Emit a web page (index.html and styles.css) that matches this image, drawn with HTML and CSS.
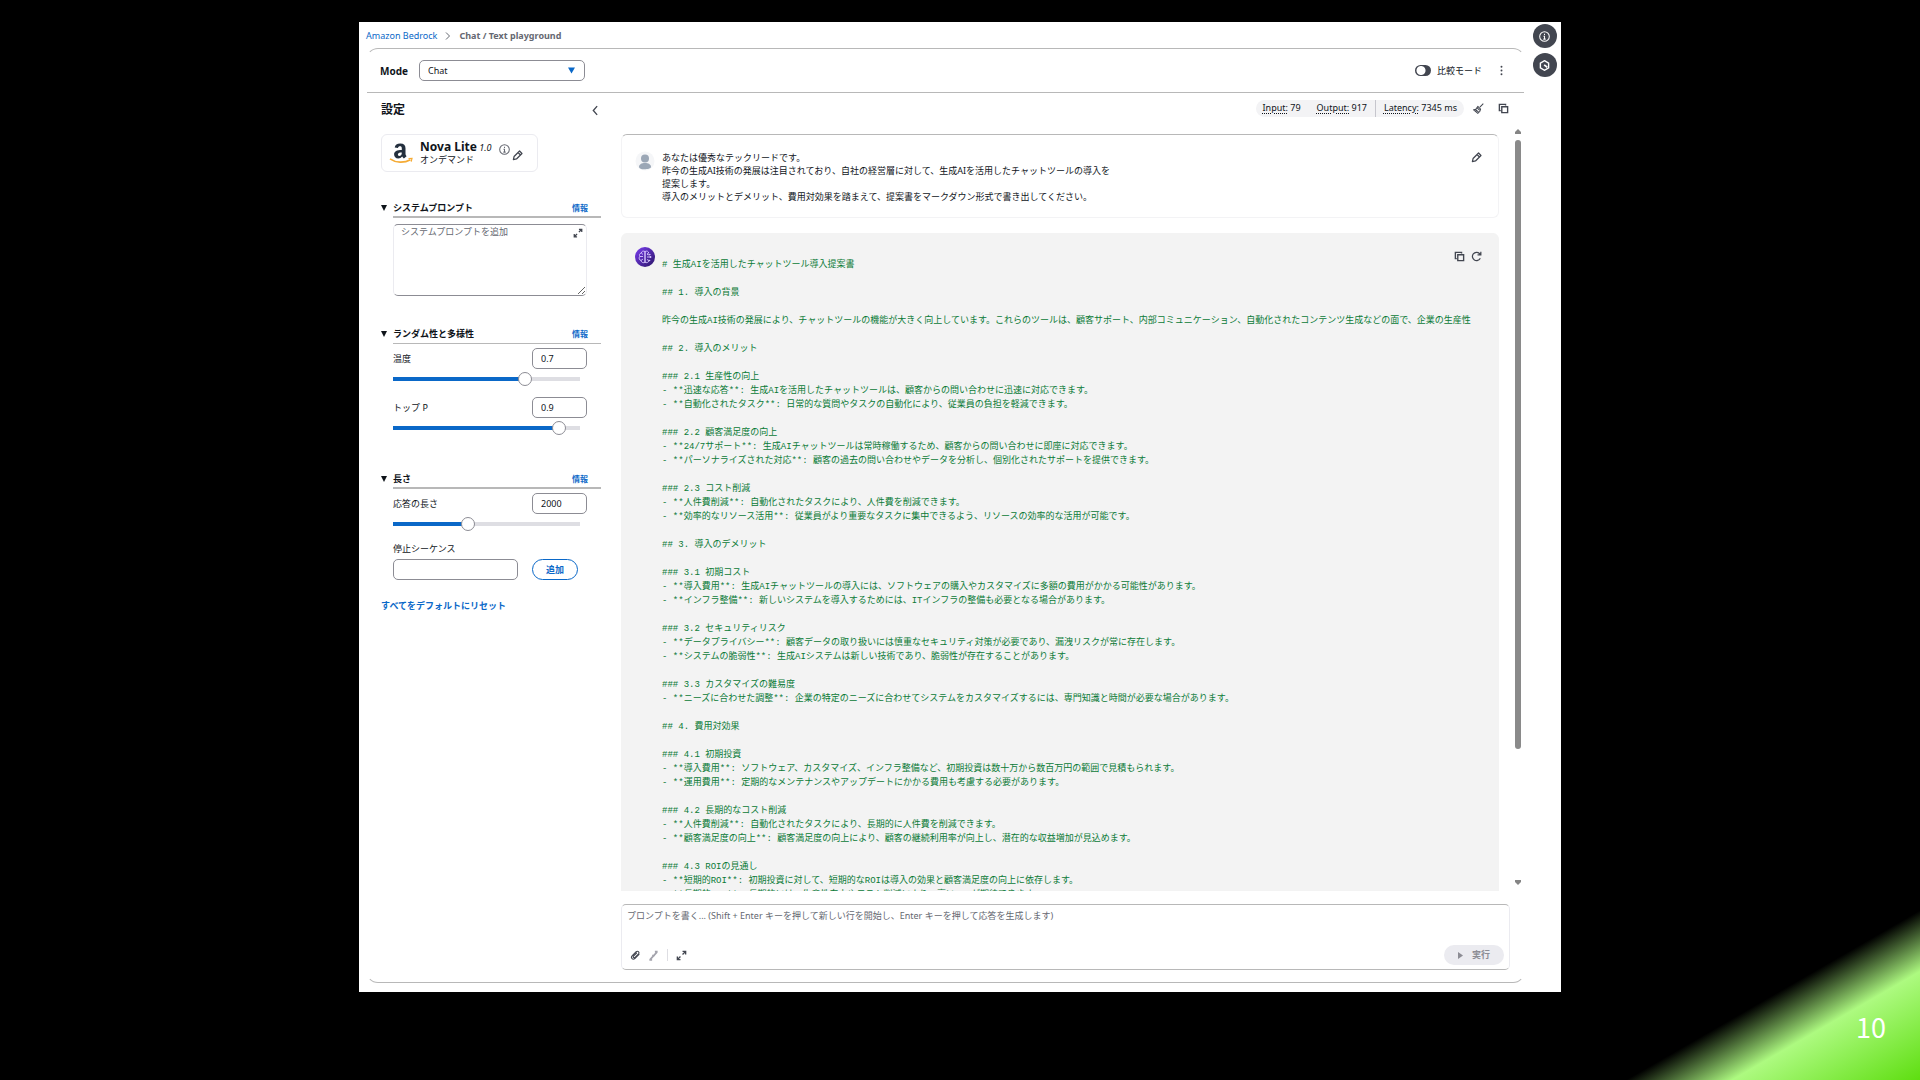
FILE: index.html
```html
<!DOCTYPE html>
<html lang="ja">
<head>
<meta charset="utf-8">
<title>Chat / Text playground</title>
<link rel="stylesheet" href="styles.css">
</head>
<body>
<svg class="sprite" aria-hidden="true">
  <symbol id="copy" viewBox="0 0 16 16"><path d="M11 3.500V2H2v9h2M5.500 5.500h8.500v8.500H5.500z" fill="none" stroke="currentColor" stroke-width="2"/></symbol>
  <symbol id="pen" viewBox="0 0 16 16"><path d="M2 14l1-4.500 8-8 3.500 3.500-8 8zM9 4l3 3" fill="none" stroke="currentColor" stroke-width="1.800" stroke-linejoin="round"/></symbol>
  <symbol id="expand" viewBox="0 0 16 16"><path d="M9.500 2H14v4.500M14 2L9.500 6.500M6.500 14H2V9.500M2 14l4.500-4.500" fill="none" stroke="currentColor" stroke-width="2"/></symbol>
  <symbol id="info" viewBox="0 0 16 16"><circle cx="8" cy="8" r="7" fill="none" stroke="currentColor" stroke-width="1.500"/><path d="M8 7v5M8 4v1.800M6.500 7.500H8M6.300 11.800h3.400" stroke="currentColor" stroke-width="1.500"/></symbol>
</svg>
<div class="slide">
  <div class="window">
    <div class="page">
      <nav class="crumbs" aria-label="breadcrumb">
        <a href="#">Amazon Bedrock</a>
        <svg class="crumb-sep" viewBox="0 0 6 8"><path d="M1 0.500L4.500 4 1 7.500" fill="none" stroke="#656871"/></svg>
        <span class="current">Chat / Text playground</span>
      </nav>
      <div class="playground">
        <header class="modebar">
          <label for="mode">Mode</label>
          <div class="select-wrap">
            <select id="mode"><option>Chat</option></select>
            <svg class="caret" viewBox="0 0 8 8"><path d="M0 0.500h8L4 7.500z" fill="#0a68c8"/></svg>
          </div>
          <label class="compare"><input type="checkbox" class="toggle">比較モード</label>
          <button class="icon-btn kebab" aria-label="menu"><svg class="ico" viewBox="0 0 16 16"><g fill="#424650"><circle cx="8" cy="2.500" r="1.400"/><circle cx="8" cy="8" r="1.400"/><circle cx="8" cy="13.500" r="1.400"/></g></svg></button>
        </header>
        <div class="body">
          <aside class="settings">
            <div class="settings-head">
              <h2>設定</h2>
              <button class="icon-btn" aria-label="collapse"><svg class="ico" viewBox="0 0 10 10"><path d="M6.500 1L3 5l3.500 4" fill="none" stroke="#424650" stroke-width="1.200"/></svg></button>
            </div>
            <div class="model">
              <svg class="logo" viewBox="0 0 24 22"><path d="M12.800 8.100V6.500c0-1.700-.5-2.300-1.800-2.300-1.200 0-1.800.6-2 1.800l-3.300-.4C6.100 3 7.900 1.500 11.300 1.500c3.600 0 5.200 1.600 5.200 4.700v5.400c0 1.100.3 1.700 1.100 2.700l-2.700 2.200c-.8-.6-1.300-1.200-1.700-1.900-1.100 1.300-2.200 1.900-4 1.900-2.500 0-4.100-1.500-4.100-3.900C5.100 9.300 7.900 8.200 12.800 8.100zm0 2.300c-2.700 0-3.900.6-3.900 2.200 0 .8.500 1.400 1.300 1.400 1.500 0 2.600-1.200 2.600-3z" fill="#232f3e"/><path d="M1 16.800c6 4.200 14 4.400 20.500.9" fill="none" stroke="#f5ab35" stroke-width="1.600"/><path d="M19.500 16.500l3.500-.2-.8 3.300" fill="none" stroke="#f5ab35" stroke-width="1.200"/></svg>
              <div class="model-text">
                <div class="model-name"><strong>Nova Lite</strong> <em>1.0</em></div>
                <div>オンデマンド</div>
              </div>
              <svg class="model-info"><use href="#info"/></svg>
              <button class="icon-btn" aria-label="edit model"><svg class="ico"><use href="#pen"/></svg></button>
            </div>

            <section class="group">
              <div class="group-head thick"><h3>システムプロンプト</h3><a href="#">情報</a></div>
              <div class="area-wrap">
                <textarea class="field" aria-label="システムプロンプト" placeholder="システムプロンプトを追加"></textarea>
                <svg class="area-expand"><use href="#expand"/></svg>
              </div>
            </section>

            <section class="group">
              <div class="group-head"><h3>ランダム性と多様性</h3><a href="#">情報</a></div>
              <div class="param"><label for="temp">温度</label><input class="field num" id="temp" value="0.7"></div>
              <input type="range" class="slider" aria-label="温度" value="72" style="--fill:72%">
              <div class="param"><label for="topp">トップ P</label><input class="field num" id="topp" value="0.9"></div>
              <input type="range" class="slider" aria-label="トップ P" value="92" style="--fill:92%">
            </section>

            <section class="group">
              <div class="group-head thick"><h3>長さ</h3><a href="#">情報</a></div>
              <div class="param"><label for="len">応答の長さ</label><input class="field num" id="len" value="2000"></div>
              <input type="range" class="slider" aria-label="応答の長さ" value="39" style="--fill:39%">
              <label class="stop-label" for="stop">停止シーケンス</label>
              <div class="stop"><input class="field" id="stop"><button class="add">追加</button></div>
            </section>
            <a class="reset" href="#">すべてをデフォルトにリセット</a>
          </aside>

          <main class="chat">
            <div class="toolbar">
              <div class="metrics">
                <span><u>Input:</u> 79</span><span><u>Output:</u> 917</span><span class="ruled"><u>Latency:</u> 7345 ms</span>
              </div>
              <button class="icon-btn" aria-label="clear"><svg class="ico" viewBox="0 0 16 16"><path d="M15 1l-5 5M7 5l4 4-1 3-3 3-6-5 3-1zM4 9.500l4.500 4M6 7l3.500 3.500M3.500 12l2-1.500" fill="none" stroke="currentColor" stroke-width="1.500"/></svg></button>
              <button class="icon-btn" aria-label="copy"><svg class="ico"><use href="#copy"/></svg></button>
            </div>
            <div class="scroller">
              <div class="messages">
                <article class="msg user">
                  <svg class="avatar" viewBox="0 0 20 20"><circle cx="10" cy="10" r="9.500" fill="#f5f6f8"/><circle cx="10" cy="7.500" r="4" fill="#9ba7b6"/><path d="M4 16c0-2.500 2.500-4 6-4s6 1.500 6 4-12 3.500-12 0z" fill="#9ba7b6"/></svg>
                  <p>あなたは優秀なテックリードです。
昨今の生成AI技術の発展は注目されており、自社の経営層に対して、生成AIを活用したチャットツールの導入を
提案します。
導入のメリットとデメリット、費用対効果を踏まえて、提案書をマークダウン形式で書き出してください。</p>
                  <div class="actions"><button class="icon-btn" aria-label="edit"><svg class="ico"><use href="#pen"/></svg></button></div>
                </article>
                <article class="msg reply">
                  <svg class="avatar" viewBox="0 0 20 20"><defs><linearGradient id="g" x1="0" y1="0" x2="1" y2="1"><stop offset="0" stop-color="#7a3df0"/><stop offset="1" stop-color="#2a1566"/></linearGradient></defs><circle cx="10" cy="10" r="10" fill="url(#g)"/><g fill="none" stroke="#d9c9ff" stroke-width="0.900"><path d="M10 4.500C8 3.500 6.500 4.500 6.300 6 4.500 6.500 4 8 4.800 9.500 3.500 11 4.200 13 6 13.500c.3 2 2.500 2.800 4 1.700zM10 4.500v10.700M6.300 6l1.700 1.500M4.800 9.500H8M6 13.500L8 12"/><path d="M10 4.500c2-1 3.500 0 3.700 1.500L12 7M10 15.200c1.500 1 3.500.3 4-1.700l-2-1M12 10h3.500M12 7.500L14.500 8"/></g><g fill="#d9c9ff"><circle cx="15.500" cy="10" r="0.900"/><circle cx="14.800" cy="7.500" r="0.800"/><circle cx="14.500" cy="13.500" r="0.800"/></g></svg>
                  <pre># 生成AIを活用したチャットツール導入提案書

## 1. 導入の背景

昨今の生成AI技術の発展により、チャットツールの機能が大きく向上しています。これらのツールは、顧客サポート、内部コミュニケーション、自動化されたコンテンツ生成などの面で、企業の生産性

## 2. 導入のメリット

### 2.1 生産性の向上
- **迅速な応答**: 生成AIを活用したチャットツールは、顧客からの問い合わせに迅速に対応できます。
- **自動化されたタスク**: 日常的な質問やタスクの自動化により、従業員の負担を軽減できます。

### 2.2 顧客満足度の向上
- **24/7サポート**: 生成AIチャットツールは常時稼働するため、顧客からの問い合わせに即座に対応できます。
- **パーソナライズされた対応**: 顧客の過去の問い合わせやデータを分析し、個別化されたサポートを提供できます。

### 2.3 コスト削減
- **人件費削減**: 自動化されたタスクにより、人件費を削減できます。
- **効率的なリソース活用**: 従業員がより重要なタスクに集中できるよう、リソースの効率的な活用が可能です。

## 3. 導入のデメリット

### 3.1 初期コスト
- **導入費用**: 生成AIチャットツールの導入には、ソフトウェアの購入やカスタマイズに多額の費用がかかる可能性があります。
- **インフラ整備**: 新しいシステムを導入するためには、ITインフラの整備も必要となる場合があります。

### 3.2 セキュリティリスク
- **データプライバシー**: 顧客データの取り扱いには慎重なセキュリティ対策が必要であり、漏洩リスクが常に存在します。
- **システムの脆弱性**: 生成AIシステムは新しい技術であり、脆弱性が存在することがあります。

### 3.3 カスタマイズの難易度
- **ニーズに合わせた調整**: 企業の特定のニーズに合わせてシステムをカスタマイズするには、専門知識と時間が必要な場合があります。

## 4. 費用対効果

### 4.1 初期投資
- **導入費用**: ソフトウェア、カスタマイズ、インフラ整備など、初期投資は数十万から数百万円の範囲で見積もられます。
- **運用費用**: 定期的なメンテナンスやアップデートにかかる費用も考慮する必要があります。

### 4.2 長期的なコスト削減
- **人件費削減**: 自動化されたタスクにより、長期的に人件費を削減できます。
- **顧客満足度の向上**: 顧客満足度の向上により、顧客の継続利用率が向上し、潜在的な収益増加が見込めます。

### 4.3 ROIの見通し
- **短期的ROI**: 初期投資に対して、短期的なROIは導入の効果と顧客満足度の向上に依存します。
- **長期的ROI**: 長期的には、生産性向上やコスト削減により、高いROIが期待できます。</pre>
                  <div class="actions">
                    <button class="icon-btn" aria-label="copy reply"><svg class="ico"><use href="#copy"/></svg></button>
                    <button class="icon-btn" aria-label="retry"><svg class="ico" viewBox="0 0 16 16"><path d="M13.500 10.500a6 6 0 1 1-1.200-6.800L14 5.500M14.300 1v4.800H9.500" fill="none" stroke="currentColor" stroke-width="1.800"/></svg></button>
                  </div>
                </article>
              </div>
              <div class="scrollbar" aria-hidden="true">
                <svg viewBox="0 0 6 5"><path d="M3 0l3 3v2H0V3z" fill="#858585"/></svg>
                <div class="track"><div class="thumb"></div></div>
                <svg viewBox="0 0 6 5"><path d="M3 5L0 2V0h6v2z" fill="#858585"/></svg>
              </div>
            </div>
            <form class="composer">
              <textarea aria-label="プロンプト" placeholder="プロンプトを書く... (Shift + Enter キーを押して新しい行を開始し、Enter キーを押して応答を生成します)"></textarea>
              <div class="composer-bar">
                <button type="button" class="icon-btn" aria-label="attach"><svg class="ico" viewBox="0 0 16 16"><path d="M13.500 6l-6.500 6.500c-3 2.500-6.500-1-4-4L9 2.500c2.500-2 5 .8 3.500 3L7 11c-1.500 1-3-.5-2-2l5-5" fill="none" stroke="currentColor" stroke-width="1.600"/></svg></button>
                <button type="button" class="icon-btn faded" aria-label="tools"><svg class="ico" viewBox="0 0 16 16"><path d="M3 14L13 3M2 14.500h4M6 8l4 0M10 2.500h4" fill="none" stroke="currentColor" stroke-width="2.500"/></svg></button>
                <span class="divider"></span>
                <button type="button" class="icon-btn" aria-label="expand"><svg class="ico"><use href="#expand"/></svg></button>
                <button type="button" class="run" disabled><svg viewBox="0 0 5 7"><path d="M0 0l5 3.500L0 7z" fill="#8c8c94"/></svg>実行</button>
              </div>
            </form>
          </main>
        </div>
      </div>
    </div>
    <div class="rail">
      <button class="round" aria-label="info"><svg><use href="#info"/></svg></button>
      <button class="round" aria-label="history"><svg viewBox="0 0 16 16"><path d="M8 1l6 3.500v7L8 15l-6-3.500v-7z" fill="none" stroke="currentColor" stroke-width="2"/><path d="M7.500 7l4.500 3.500" stroke="currentColor" stroke-width="2.500"/></svg></button>
    </div>
  </div>
  <span class="page-number">10</span>
</div>
</body>
</html>
```
FILE: styles.css
```css
* { box-sizing: border-box; }
body {
  margin: 0;
  background: #000;
  color: #0f141a;
  font: 9px/14px "Noto Sans", "Noto Sans CJK JP", sans-serif;
}
h2, h3, p, pre { margin: 0; }
a { color: #0a68c8; text-decoration: none; }
button, input, select, textarea { font: inherit; color: inherit; margin: 0; }
.sprite { position: absolute; width: 0; height: 0; }

.slide {
  position: relative;
  height: 100vh;
  padding: 22px 0 88px;
  display: flex;
  justify-content: center;
  background: linear-gradient(150deg, #000 calc(100% - 147px), #adfa80 calc(100% - 94px), #5ede10 100%);
}
.page-number {
  position: absolute;
  right: 34px;
  bottom: 35px;
  color: #fff;
  font: 27px/36px "Noto Sans CJK JP", sans-serif;
}
.window {
  width: 62.6%;
  background: #fff;
  display: flex;
  padding: 0 4px 9px 7px;
}
.page { flex: 1; min-width: 0; display: flex; flex-direction: column; }
.rail { width: 32px; padding-top: 2px; display: flex; flex-direction: column; align-items: flex-end; gap: 5px; }
.round {
  width: 24px; height: 24px;
  padding: 0; border: 0; border-radius: 50%;
  background: #424650; color: #fff;
  display: grid; place-items: center;
}
.round svg { width: 11px; height: 11px; }

.crumbs { height: 26px; padding-top: 1px; display: flex; align-items: center; gap: 8px; }
.crumb-sep { width: 6px; height: 8px; }
.current { font-weight: 700; color: #656871; }

.playground {
  flex: 1; min-height: 0;
  display: flex; flex-direction: column;
  border: 1px solid;
  border-color: #b8b8b8 transparent;
  border-radius: 12px;
}
.modebar {
  height: 44px; flex: none;
  padding: 0 17px 0 13px;
  display: flex; align-items: center;
  border-bottom: 1px solid #b8b8b8;
}
.modebar label:first-child { width: 39px; font-weight: 700; font-size: 10px; }
.select-wrap { position: relative; width: 166px; }
select {
  appearance: none;
  width: 100%; height: 21px;
  padding: 0 8px;
  border: 1px solid #8c8c94; border-radius: 5px;
  background: #fff;
}
.caret { position: absolute; right: 10px; top: 7px; width: 7px; height: 7px; }
.compare { margin-left: auto; display: flex; align-items: center; gap: 6px; }
.toggle {
  appearance: none;
  width: 16px; height: 11px; border-radius: 6px;
  background: radial-gradient(circle at 6px 50%, #fff 4px, #424650 5px);
}
.icon-btn {
  padding: 0; border: 0; background: none; color: #424650;
  width: 11px; height: 11px; display: block; flex: none;
}
.ico { width: 100%; height: 100%; display: block; }
.kebab { margin-left: 14px; }

.body { flex: 1; min-height: 0; display: flex; }
.settings { width: 254px; flex: none; padding-left: 14px; }
.settings-head { height: 41px; padding: 9px 20px 0 0; display: flex; justify-content: space-between; }
.settings-head .icon-btn { margin-top: 3px; }
h2 { font-size: 12px; line-height: 16px; }
.model {
  width: 157px; height: 38px; padding: 0 14px 0 7px;
  border: 1px solid #ebebf0; border-radius: 6px;
  display: flex; align-items: center;
}
.logo { width: 24px; height: 22px; margin-right: 7px; }
.model-text { flex: 1; line-height: 12px; white-space: nowrap; }
.model-name strong { font-size: 12px; }
.model-info { width: 11px; height: 11px; margin-bottom: 8px; color: #656871; }
.model .icon-btn { margin: 4px 0 0 2px; }

.group { margin-left: 12px; width: 208px; margin-top: 29px; }
.group-head {
  position: relative;
  height: 17px; padding-right: 13px;
  display: flex; justify-content: space-between;
  border-bottom: 1px solid #b8b8b8;
}
.group-head.thick { border-bottom-width: 2px; }
.group-head::before {
  content: "";
  position: absolute; left: -12px; top: 4px;
  border: 3px solid transparent; border-top: 6px solid #0f141a; border-bottom: 0;
}
h3 { font-size: 9px; line-height: 14px; }
.group-head a { font-size: 8px; font-weight: 700; }
.field {
  border: 1px solid #8c8c94; border-radius: 5px; background: #fff;
  padding: 0 8px; height: 21px; min-width: 0;
}
.area-wrap { position: relative; width: 194px; height: 72px; margin-top: 6px; }
.area-wrap .field {
  width: 100%; height: 100%; display: block;
  padding: 0 7px; border-color: #8c8c94 #ebebf0;
}
textarea::placeholder { color: #656871; opacity: 1; }
.area-expand { position: absolute; right: 4px; top: 4px; width: 10px; height: 10px; color: #424650; }
.param { margin: 4px 14px 0 0; display: flex; justify-content: space-between; align-items: center; }
.num { width: 55px; }
.slider {
  appearance: none;
  display: block;
  width: 187px; height: 14px; margin: 3px 0 11px;
  background: linear-gradient(90deg, #0a68c8 var(--fill), #dedee3 var(--fill)) center / 100% 4px no-repeat;
}
.slider::-webkit-slider-thumb {
  appearance: none;
  width: 14px; height: 14px; border-radius: 50%;
  border: 1px solid #8c8c94; background: #fff;
}
.slider + .param { margin-top: 0; }
.group:nth-of-type(2) { margin-top: 31px; }
.group:nth-of-type(3) { margin-top: 37px; }
.stop-label { display: block; }
.stop { display: flex; gap: 14px; margin-top: 3px; }
.stop .field { width: 125px; }
.add {
  width: 46px; height: 21px; padding: 0;
  border: 1px solid #0a68c8; border-radius: 11px;
  background: #fff; color: #0a68c8; font-weight: 700;
}
.reset { display: block; margin-top: 19px; font-weight: 700; }

.chat { flex: 1; min-width: 0; display: flex; flex-direction: column; padding: 0 3px 12px 0; }
.toolbar { height: 41px; flex: none; padding: 7px 12px 0 0; display: flex; justify-content: flex-end; gap: 14px; }
.toolbar .icon-btn { margin-top: 3px; }
.metrics { display: flex; height: 17px; padding: 0 7px; gap: 16px; border-radius: 9px; background: #f3f3f5; line-height: 16px; margin-right: -5px; }
.metrics u { text-decoration: underline dotted; text-underline-offset: 2px; }
.metrics .ruled { border-left: 1px solid #c6c6cd; padding-left: 8px; margin-left: -8px; }

.scroller { flex: 1; min-height: 0; display: flex; gap: 16px; }
.messages { flex: 1; min-width: 0; overflow: hidden; display: flex; flex-direction: column; gap: 15px; }
.msg {
  position: relative; flex: none;
  display: flex; align-items: flex-start; gap: 7px;
  padding-left: 13px;
  border: 1px solid; border-radius: 6px;
}
.user { border-color: #b8b8b8 #f3f3f5 #f3f3f5; padding-top: 16px; padding-bottom: 14px; }
.user p { white-space: pre-line; line-height: 13px; }
.reply { background: #f3f3f3; border-color: #f3f3f3; padding-top: 13px; }
.avatar { width: 20px; height: 20px; flex: none; }
pre {
  flex: 1; min-width: 0;
  padding: 11px 0 14px;
  color: #0a7a36;
  font: 9px/14px "Liberation Mono", "Noto Sans CJK JP", monospace;
}
.actions { position: absolute; right: 16px; top: 17px; display: flex; gap: 6px; }
.scrollbar { width: 6px; flex: none; margin: -5px 0 6px; display: flex; flex-direction: column; gap: 6px; }
.scrollbar svg { width: 6px; height: 5px; display: block; }
.track { flex: 1; min-height: 0; }
.thumb { height: 83%; border-radius: 3px; background: #8a8a8a; }

.composer {
  flex: none; margin: 13px 11px 0 0; padding: 4px 5px;
  border: 1px solid; border-color: #b8b8b8 #ebebf0; border-radius: 5px;
}
.composer textarea { display: block; width: 100%; height: 36px; padding: 0; border: 0; resize: none; overflow: hidden; background: none; }
.composer-bar { display: flex; align-items: center; gap: 7px; padding-left: 3px; height: 20px; }
.faded { color: #a4a4ad; }
.divider { width: 1px; height: 12px; background: #dedee3; margin: 0 1px; }
.run {
  margin-left: auto; width: 60px; height: 20px; padding: 0;
  border: 0; border-radius: 10px; background: #ebebf0; color: #8c8c94; font-weight: 700;
  display: flex; align-items: center; justify-content: center; gap: 9px;
}
.run svg { width: 5px; height: 7px; }
```
